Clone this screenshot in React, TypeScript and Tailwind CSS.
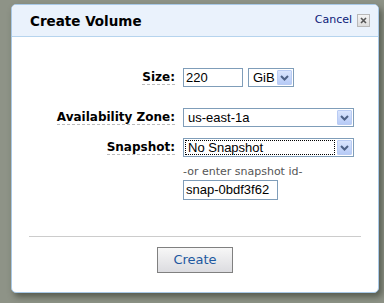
import React from 'react';

const sans = "font-['DejaVu_Sans',Verdana,sans-serif]";
const arial = "font-['Liberation_Sans',Arial,sans-serif]";

function Chevron() {
  return (
    <svg width="9" height="6" viewBox="0 0 9 6">
      <path d="M1 1 L4.5 4.5 L8 1" fill="none" stroke="#4d6185" strokeWidth="2" />
    </svg>
  );
}

function FakeSelect({ value, width, focused }: { value: string; width: string; focused?: boolean }) {
  return (
    <div className={`flex h-[19px] ${width} items-stretch border border-[#7f9db9] bg-white`}>
      <div className="flex flex-1 items-center p-[1px]">
        <div
          className={`flex h-full flex-1 items-center pl-[2px] text-[13px] text-black ${arial} ${
            focused ? 'border border-dotted border-black' : 'border border-transparent'
          }`}
        >
          {value}
        </div>
      </div>
      <div className="m-[1px] flex w-[15px] items-center justify-center rounded-[1px] border border-[#b9cbf3] bg-gradient-to-b from-[#dae5fd] to-[#b7cbf7]">
        <Chevron />
      </div>
    </div>
  );
}

function Label({ children }: { children: React.ReactNode }) {
  return (
    <div className="flex justify-end">
      <span className={`border-b border-dashed border-[#bbbbbb] text-[12px] leading-[14px] font-bold text-black ${sans}`}>
        {children}
      </span>
    </div>
  );
}

export default function App() {
  return (
    <div className="h-[303px] w-[384px] overflow-hidden bg-[#8e9387] pt-[4px] pl-[11px]">
      <div className="h-[289px] w-[368px] overflow-hidden rounded-[5px] border border-[#a8c8e6] bg-white shadow-[3px_4px_6px_rgba(40,45,35,0.55)]">
        {/* header */}
        <div className="flex h-[32px] items-center justify-between border-b border-[#b6d4ee] bg-[#eaf2fc] pr-[8px] pl-[18px]">
          <h1 className={`pt-[2px] text-[13.5px] font-bold text-black ${sans}`}>Create Volume</h1>
          <div className="flex items-center gap-[5px]">
            <span className={`text-[11px] text-[#0b1a78] ${sans}`}>Cancel</span>
            <div className="flex h-[13px] w-[13px] items-center justify-center border border-[#b8b8b8] bg-gradient-to-b from-[#f4f4f4] to-[#dcdcdc]">
              <svg width="7" height="7" viewBox="0 0 7 7">
                <path d="M1 1 L6 6 M6 1 L1 6" stroke="#555" strokeWidth="1.6" />
              </svg>
            </div>
          </div>
        </div>

        {/* form */}
        <div className="mt-[31px] grid grid-cols-[163px_1fr] items-center gap-x-[8px]">
          <Label>Size:</Label>
          <div className="flex items-center gap-[5px]">
            <div className={`flex h-[19px] w-[60px] items-center border border-[#7f9db9] pl-[2px] text-[13px] text-black ${arial}`}>
              220
            </div>
            <div className="flex h-[19px] w-[46px] items-stretch border border-[#7f9db9]">
              <div className={`flex flex-1 items-center pl-[4px] text-[13px] ${arial}`}>GiB</div>
              <div className="m-[1px] flex w-[15px] items-center justify-center rounded-[1px] border border-[#b9cbf3] bg-gradient-to-b from-[#dae5fd] to-[#b7cbf7]">
                <Chevron />
              </div>
            </div>
          </div>

          <div className="col-span-2 h-[21px]" />

          <Label>Availability Zone:</Label>
          <FakeSelect value="us-east-1a" width="w-[171px]" />

          <div className="col-span-2 h-[11px]" />

          <Label>Snapshot:</Label>
          <FakeSelect value="No Snapshot" width="w-[171px]" focused />

          <div />
          <div className={`mt-[8px] text-[11px] leading-[13px] text-[#555555] ${sans}`}>-or enter snapshot id-</div>

          <div />
          <div className={`mt-[2px] flex h-[20px] w-[95px] items-center border border-[#7f9db9] pl-[2px] text-[13px] text-black ${arial}`}>
            snap-0bdf3f62
          </div>
        </div>

        {/* footer */}
        <div className="mx-[17px] mt-[36px] h-[1px] bg-[#cccccc]" />
        <div className="mt-[10px] flex justify-center">
          <button
            className={`h-[26px] w-[76px] border border-[#808080] bg-gradient-to-b from-[#f7f7f7] to-[#dcdce0] text-[13px] text-[#1d58a0] ${sans}`}
          >
            Create
          </button>
        </div>
      </div>
    </div>
  );
}
